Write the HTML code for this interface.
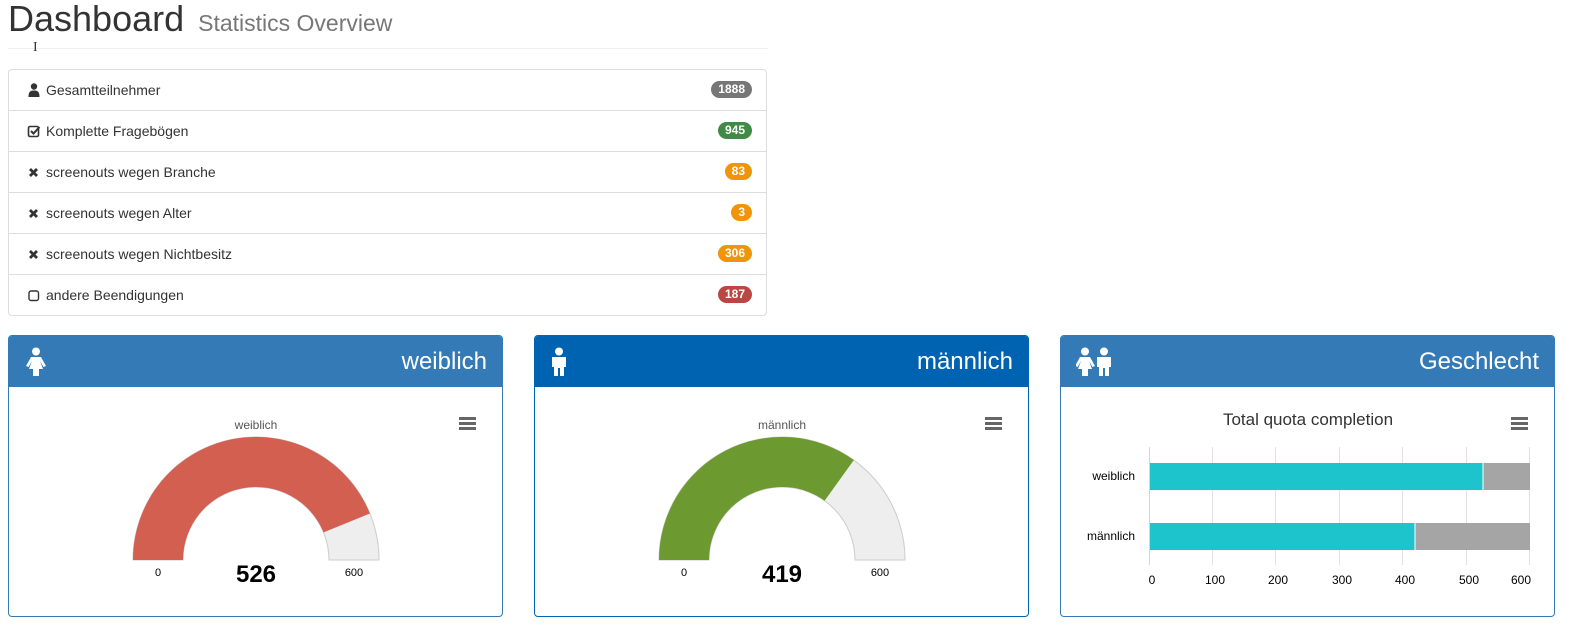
<!DOCTYPE html>
<html><head><meta charset="utf-8"><style>
body{margin:0;width:1571px;height:629px;background:#fff;font-family:"Liberation Sans",Arial,sans-serif;position:relative;overflow:hidden;color:#333}
.a{position:absolute}
h1{position:absolute;left:8px;top:-2px;margin:0;font-size:36px;font-weight:normal;color:#333;white-space:nowrap}
h1 small{font-size:23px;color:#777;margin-left:4px}
.hr{left:8px;top:48px;width:760px;height:1px;background:#eee}
.list{left:8px;top:69px;width:757px;height:245px;border:1px solid #ddd;border-radius:4px}
.row{position:absolute;left:0;width:757px;height:40px;border-bottom:1px solid #ddd;font-size:14px}
.row .t{position:absolute;left:37px;top:12px}
.row .i{position:absolute;left:18px;top:12px;width:14px;height:16px}
.badge{position:absolute;right:14px;top:11px;height:17px;line-height:17px;border-radius:9px;color:#fff;font-size:12px;font-weight:bold;padding:0 7px}
.panel{position:absolute;top:335px;width:493px;height:280px;border:1px solid #337ab7;border-radius:4px;overflow:hidden;background:#fff}
.ph{position:absolute;left:0;top:0;width:100%;height:51px;background:#337ab7;color:#fff}
.ph .tt{position:absolute;right:15px;top:12px;font-size:24px}
.ham{position:absolute;width:17px;height:3px;background:#666;box-shadow:0 5px 0 #666,0 10px 0 #666}
svg text{font-family:"Liberation Sans",Arial,sans-serif}
</style></head><body>
<h1>Dashboard <small>Statistics Overview</small></h1>
<div class="a hr"></div>
<div class="a" style="left:33px;top:40px;font-size:14px;color:#333;font-family:'Liberation Serif',serif">I</div>
<div class="a list">
<div class="row" style="top:0"><svg class="i" viewBox="0 0 14 16"><circle cx="7" cy="4.5" r="3.2" fill="#333"/><path d="M1.5 15 C1.5 9 4 8.5 7 8.5 C10 8.5 12.5 9 12.5 15Z" fill="#333"/></svg><span class="t">Gesamtteilnehmer</span><span class="badge" style="background:#777">1888</span></div>
<div class="row" style="top:41px"><svg class="i" viewBox="0 0 14 16"><rect x="1.5" y="3.5" width="10" height="10" rx="1.5" fill="none" stroke="#333" stroke-width="1.6"/><path d="M4 8 L6.5 10.5 L12.5 4" fill="none" stroke="#333" stroke-width="2"/></svg><span class="t">Komplette Fragebögen</span><span class="badge" style="background:#3f8b45">945</span></div>
<div class="row" style="top:82px"><svg class="i" viewBox="0 0 14 16"><path d="M3 5 L10 12 M10 5 L3 12" stroke="#333" stroke-width="2.8"/></svg><span class="t">screenouts wegen Branche</span><span class="badge" style="background:#f0940a">83</span></div>
<div class="row" style="top:123px"><svg class="i" viewBox="0 0 14 16"><path d="M3 5 L10 12 M10 5 L3 12" stroke="#333" stroke-width="2.8"/></svg><span class="t">screenouts wegen Alter</span><span class="badge" style="background:#f0940a">3</span></div>
<div class="row" style="top:164px"><svg class="i" viewBox="0 0 14 16"><path d="M3 5 L10 12 M10 5 L3 12" stroke="#333" stroke-width="2.8"/></svg><span class="t">screenouts wegen Nichtbesitz</span><span class="badge" style="background:#f0940a">306</span></div>
<div class="row" style="top:205px;border-bottom:none"><svg class="i" viewBox="0 0 14 16"><rect x="2" y="4" width="9.5" height="9.5" rx="2" fill="none" stroke="#333" stroke-width="1.4"/></svg><span class="t">andere Beendigungen</span><span class="badge" style="background:#b94744">187</span></div>
</div>

<div class="panel" style="left:8px">
<div class="ph"><svg class="a" style="left:16px;top:11px" width="22" height="30" viewBox="0 0 22 30"><circle cx="11" cy="4.5" r="4" fill="#fff"/><path d="M6 10 H16 L21 19 L18.5 20 L15 14 L18 22 H14 V29 H8 V22 H4 L7 14 L3.5 20 L1 19Z" fill="#fff"/></svg><span class="tt">weiblich</span></div>
</div>
<div class="panel" style="left:534px;border-color:#0063b1">
<div class="ph" style="background:#0063b1"><svg class="a" style="left:14px;top:11px" width="20" height="30" viewBox="0 0 20 30"><circle cx="10" cy="4.5" r="4" fill="#fff"/><path d="M3 10 H17 V20 H15 V29 H11 V21 H9 V29 H5 V20 H3Z" fill="#fff"/></svg><span class="tt">männlich</span></div>
</div>
<div class="panel" style="left:1060px">
<div class="ph"><svg class="a" style="left:15px;top:11px" width="40" height="30" viewBox="0 0 40 30"><circle cx="9" cy="4.5" r="4" fill="#fff"/><path d="M4 10 H14 L19 19 L16.5 20 L13 14 L16 22 H12 V29 H6 V22 H2 L5 14 L1.5 20 L-1 19Z" fill="#fff"/><circle cx="28" cy="4.5" r="4" fill="#fff"/><path d="M21 10 H35 V20 H33 V29 H29 V21 H27 V29 H23 V20 H21Z" fill="#fff"/></svg><span class="tt">Geschlecht</span></div>
</div>

<svg class="a" style="left:0;top:0" width="1571" height="629">
<text x="256" y="429" font-size="12" fill="#555" text-anchor="middle">weiblich</text>
<path d="M133 560 A123 123 0 0 1 379 560 L329 560 A73 73 0 0 0 183 560Z" fill="#eeeeee" stroke="#ccc" stroke-width="1"/>
<path d="M133 560 A123 123 0 0 1 369.9 513.5 L323.6 532.4 A73 73 0 0 0 183 560Z" fill="#d35f50"/>
<text x="158" y="576" font-size="11" fill="#000" text-anchor="middle">0</text>
<text x="354" y="576" font-size="11" fill="#000" text-anchor="middle">600</text>
<text x="256" y="582" font-size="24" font-weight="bold" fill="#000" text-anchor="middle">526</text>
<text x="782" y="429" font-size="12" fill="#555" text-anchor="middle">männlich</text>
<path d="M659 560 A123 123 0 0 1 905 560 L855 560 A73 73 0 0 0 709 560Z" fill="#eeeeee" stroke="#ccc" stroke-width="1"/>
<path d="M659 560 A123 123 0 0 1 853.8 460.1 L824.6 500.7 A73 73 0 0 0 709 560Z" fill="#6d9a30"/>
<text x="684" y="576" font-size="11" fill="#000" text-anchor="middle">0</text>
<text x="880" y="576" font-size="11" fill="#000" text-anchor="middle">600</text>
<text x="782" y="582" font-size="24" font-weight="bold" fill="#000" text-anchor="middle">419</text>
<text x="1308" y="425" font-size="17" fill="#333" text-anchor="middle">Total quota completion</text>
<g stroke="#e2e2e2" stroke-width="1">
<line x1="1212.5" y1="447" x2="1212.5" y2="565"/><line x1="1275.5" y1="447" x2="1275.5" y2="565"/><line x1="1339.5" y1="447" x2="1339.5" y2="565"/><line x1="1402.5" y1="447" x2="1402.5" y2="565"/><line x1="1466.5" y1="447" x2="1466.5" y2="565"/><line x1="1529.5" y1="447" x2="1529.5" y2="565"/>
</g>
<line x1="1149.5" y1="447" x2="1149.5" y2="565" stroke="#ccd6eb"/>
<rect x="1150" y="463" width="333" height="27" fill="#1ec4cb"/><rect x="1483" y="463" width="47" height="27" fill="#a5a5a5"/>
<rect x="1150" y="523" width="265" height="27" fill="#1ec4cb"/><rect x="1415" y="523" width="115" height="27" fill="#a5a5a5"/>
<line x1="1483" y1="463" x2="1483" y2="490" stroke="#fff"/><line x1="1415" y1="523" x2="1415" y2="550" stroke="#fff"/>
<text x="1135" y="480" font-size="12" fill="#000" text-anchor="end">weiblich</text>
<text x="1135" y="540" font-size="12" fill="#000" text-anchor="end">männlich</text>
<g font-size="12" fill="#000" text-anchor="middle">
<text x="1152" y="584">0</text><text x="1215" y="584">100</text><text x="1278" y="584">200</text><text x="1342" y="584">300</text><text x="1405" y="584">400</text><text x="1469" y="584">500</text><text x="1521" y="584">600</text>
</g>
</svg>
<div class="ham" style="left:459px;top:417px"></div>
<div class="ham" style="left:985px;top:417px"></div>
<div class="ham" style="left:1511px;top:417px"></div>
</body></html>
